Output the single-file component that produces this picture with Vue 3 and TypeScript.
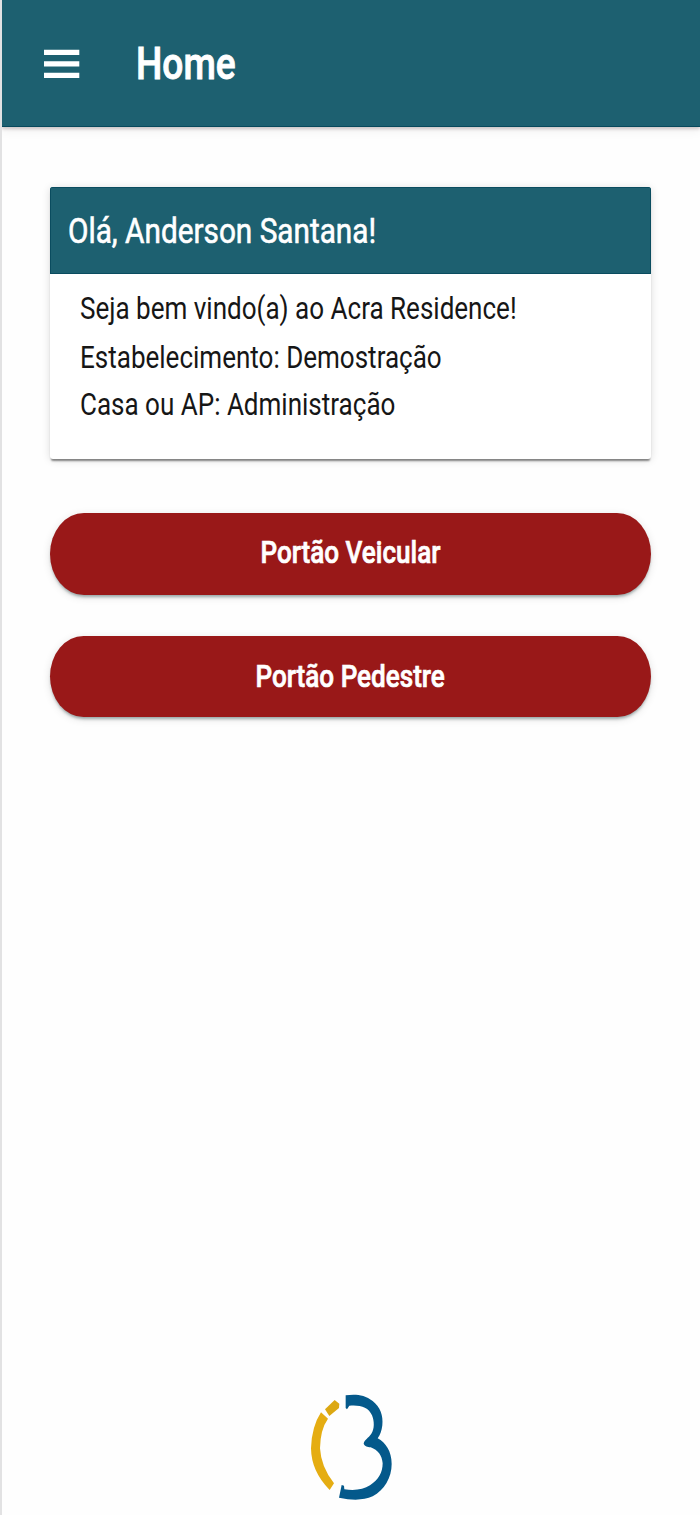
<script setup lang="ts">
interface InfoLine {
  label: string
  tone: string
}

const greeting: string = 'Olá, Anderson Santana!'
const lines: InfoLine[] = [
  { label: 'Seja bem vindo(a) ao Acra Residence!', tone: 'welcome' },
  { label: 'Estabelecimento: Demostração', tone: 'place' },
  { label: 'Casa ou AP: Administração', tone: 'unit' },
]
const gates: string[] = ['Portão Veicular', 'Portão Pedestre']
</script>

<template>
  <div class="screen">
    <header class="toolbar">
      <button class="menu" type="button" aria-label="Menu">
        <svg width="36" height="30" viewBox="0 0 36 30">
          <path d="M0 0.7H35.3V5.9H0ZM0 12.2H35.3V17.4H0ZM0 23.8H35.3V29H0Z" fill="#fff" />
        </svg>
      </button>
      <h1 class="title">Home</h1>
    </header>

    <main class="content">
      <section class="card">
        <h2 class="card-header"><span class="greeting">{{ greeting }}</span></h2>
        <div class="card-body">
          <p v-for="line in lines" :key="line.label" :class="['line', line.tone]">
            <span class="line-text">{{ line.label }}</span>
          </p>
        </div>
      </section>

      <button v-for="gate in gates" :key="gate" class="gate" type="button">
        <span class="gate-text">{{ gate }}</span>
      </button>
    </main>

    <footer class="brand">
      <svg width="100" height="125" viewBox="0 0 300 375">
        <path d="M63 82L84 101Q61 133 60 190Q63 246 102 295L89 315Q34 260 33 190Q35 125 63 82Z" fill="#e5ad12" />
        <path d="M75 73L104 45L118 56L117 69L88 93Z" fill="#dca812" />
        <path d="M137 31C164 27 193 28 218 48C241 67 250 91 247 121C245 139 240 150 233 160C257 173 275 199 275 237C275 278 253 315 218 334C191 346 158 347 117 338L125 300L132 302L133 313C165 317 190 314 210 301C236 284 248 262 248 235C246 211 234 195 212 187C202 185 195 185 191 176C193 163 205 160 214 146C224 132 223 107 216 91C206 66 179 59 148 62L141 73L137 69Z" fill="#04598b" />
      </svg>
    </footer>
  </div>
</template>

<style>
body {
  margin: 0;
  background: #fefefe;
}
</style>

<style scoped>
.screen {
  box-sizing: border-box;
  width: 700px;
  height: 1515px;
  display: flex;
  flex-direction: column;
  border-left: 2px solid #e2e2e3;
  background: #fefefe;
  font-family: Roboto, "Liberation Sans", sans-serif;
  overflow: hidden;
}
.toolbar {
  flex: none;
  box-sizing: border-box;
  height: 127px;
  display: flex;
  align-items: center;
  padding-left: 42px;
  background: #1d6070;
  border-bottom: 1px solid #07495c;
  box-shadow: 0 2px 3px rgba(80, 50, 50, 0.24), 0 4px 10px rgba(0, 0, 0, 0.06);
}
.menu {
  width: 36px;
  height: 30px;
  margin: 2px 0 0;
  padding: 0;
  border: 0;
  background: none;
}
.menu svg {
  display: block;
}
.title {
  margin: 2px 0 0 56px;
  font-size: 44.5px;
  line-height: 54px;
  font-weight: 500;
  color: #fff;
  transform: scaleX(0.834);
  transform-origin: 0 50%;
  -webkit-text-stroke: 0.9px #fff;
}
.content {
  flex: 1;
  display: flex;
  flex-direction: column;
  padding: 60px 49px 0 48px;
}
.card {
  height: 272px;
  border-radius: 3px;
  background: #fff;
  overflow: hidden;
  box-shadow: 0 3px 2px -1px rgba(0, 0, 0, 0.45), 0 1px 8px rgba(0, 0, 0, 0.14);
}
.card-header {
  box-sizing: border-box;
  height: 87px;
  margin: 0;
  padding: 0 17px;
  display: flex;
  align-items: center;
  border: 1px solid #0a4c5f;
  background: #1d6070;
  color: #fff;
  font-weight: 400;
}
.greeting {
  font-size: 34.5px;
  line-height: 42px;
  white-space: nowrap;
  transform: scaleX(0.862);
  transform-origin: 0 50%;
  -webkit-text-stroke: 0.6px #fff;
}
.card-body {
  padding: 10px 30px 0;
}
.line {
  margin: 0;
  height: 48px;
  font-size: 32px;
  line-height: 48px;
  color: #161616;
  white-space: nowrap;
}
.welcome {
  height: 49px;
}
.place {
  height: 47px;
}
.line-text {
  display: inline-block;
  transform: scaleX(0.813);
  transform-origin: 0 50%;
}
.gate {
  height: 82px;
  margin: 54px 0 0;
  padding: 0 0 4px;
  display: flex;
  align-items: center;
  justify-content: center;
  border: 0;
  border-radius: 34px / 41px;
  background: #991818;
  color: #fff;
  font-family: inherit;
  font-size: 32px;
  font-weight: 500;
  box-shadow: 0 3px 3px -1px rgba(0, 40, 40, 0.35), 0 2px 8px rgba(0, 0, 0, 0.12);
}
.gate + .gate {
  margin-top: 41px;
  height: 81px;
  padding-bottom: 2px;
}
.gate-text {
  white-space: nowrap;
  transform: scaleX(0.815);
  -webkit-text-stroke: 0.7px #fff;
}
.brand {
  flex: none;
  height: 130px;
  padding-left: 298px;
}
.brand svg {
  display: block;
}
</style>
